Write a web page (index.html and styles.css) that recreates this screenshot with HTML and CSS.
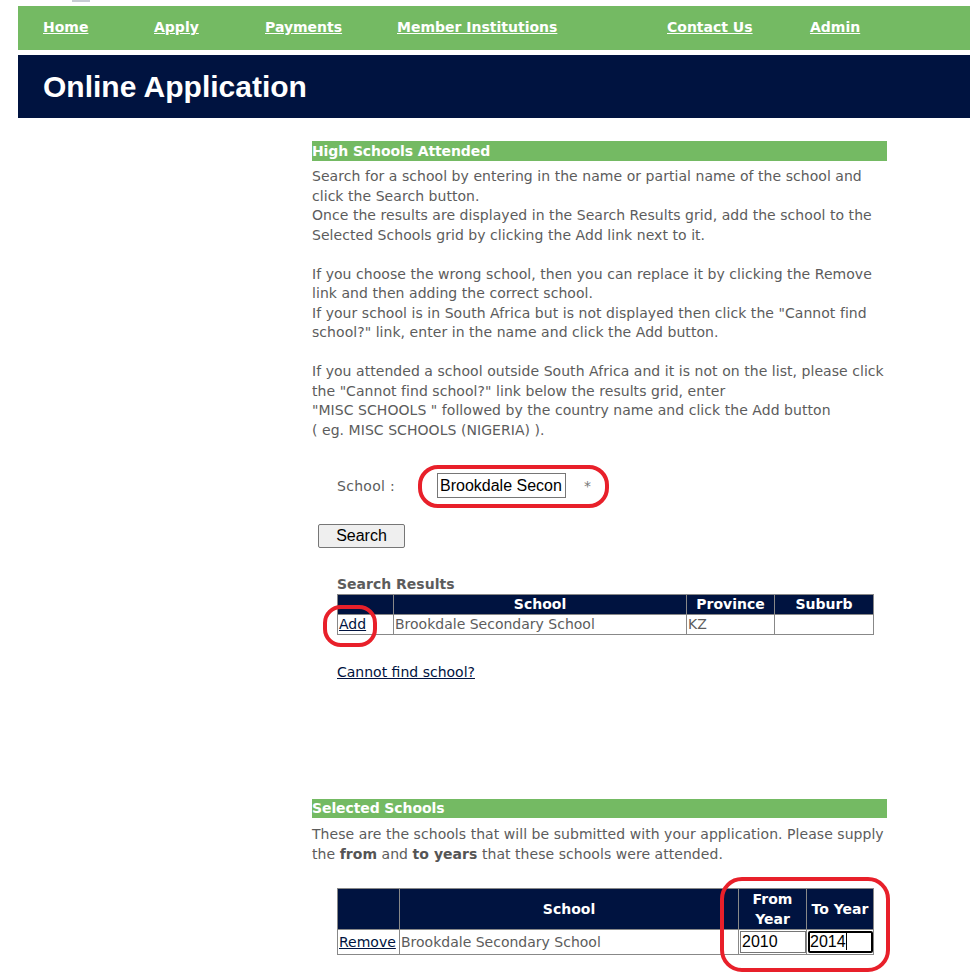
FILE: index.html
```html
<!DOCTYPE html>
<html>
<head>
<meta charset="utf-8">
<link rel="stylesheet" href="styles.css">
</head>
<body>
<div class="topmark"></div>
<div class="page">
  <nav class="nav">
    <a class="nav-link" href="#">Home</a>
    <a class="nav-link" href="#">Apply</a>
    <a class="nav-link" href="#">Payments</a>
    <a class="nav-link" href="#">Member Institutions</a>
    <a class="nav-link" href="#">Contact Us</a>
    <a class="nav-link" href="#">Admin</a>
  </nav>
  <header class="titlebar"><h1 class="title">Online Application</h1></header>

  <main class="content">
    <h2 class="section-head">High Schools Attended</h2>
    <p class="para">Search for a school by entering in the name or partial name of the school and<br>click the Search button.<br>Once the results are displayed in the Search Results grid, add the school to the<br>Selected Schools grid by clicking the Add link next to it.<br><br>If you choose the wrong school, then you can replace it by clicking the Remove<br>link and then adding the correct school.<br>If your school is in South Africa but is not displayed then click the "Cannot find<br>school?" link, enter in the name and click the Add button.<br><br>If you attended a school outside South Africa and it is not on the list, please click<br>the "Cannot find school?" link below the results grid, enter<br>"MISC SCHOOLS " followed by the country name and click the Add button<br>( eg. MISC SCHOOLS (NIGERIA) ).</p>

    <div class="school-row">
      <span class="label">School :</span>
      <span class="field-wrap">
        <input class="text-input" type="text" value="Brookdale Secon">
        <span class="req">*</span>
        <span class="ring ring-school"></span>
      </span>
    </div>

    <button class="btn">Search</button>

    <div class="results">
      <div class="results-title">Search Results</div>
      <div class="tbl-wrap">
        <table class="grid grid-results">
          <thead>
            <tr><th class="c1"></th><th class="c2">School</th><th class="c3">Province</th><th class="c4">Suburb</th></tr>
          </thead>
          <tbody>
            <tr><td><a class="link" href="#">Add</a></td><td>Brookdale Secondary School</td><td>KZ</td><td></td></tr>
          </tbody>
        </table>
        <span class="ring ring-add"></span>
      </div>
      <a class="link cannot" href="#">Cannot find school?</a>
    </div>

    <h2 class="section-head sel-head">Selected Schools</h2>
    <p class="para sel-para">These are the schools that will be submitted with your application. Please supply<br>the <b>from</b> and <b>to years</b> that these schools were attended.</p>

    <div class="tbl-wrap sel-wrap">
      <table class="grid grid-sel">
        <thead>
          <tr><th class="s1"></th><th class="s2">School</th><th class="s3">From<br>Year</th><th class="s4">To Year</th></tr>
        </thead>
        <tbody>
          <tr>
            <td><a class="link" href="#">Remove</a></td>
            <td>Brookdale Secondary School</td>
            <td class="yr"><span class="yr-input">2010</span></td>
            <td class="yr"><span class="yr-input focus">2014<span class="caret"></span></span></td>
          </tr>
        </tbody>
      </table>
      <span class="ring ring-years"></span>
    </div>
  </main>
</div>
</body>
</html>
```

FILE: styles.css
```css
html, body { margin: 0; padding: 0; background: #fff; }
body { font-family: "DejaVu Sans", Verdana, sans-serif; color: #5c5c5c; }

.topmark { position: absolute; left: 72px; top: 0; width: 18px; height: 2px; background: #c8ccd4; }

.page { padding: 6px 0 0 18px; }

.nav {
  background: #74ba63;
  height: 44px;
  display: grid;
  grid-template-columns: 111px 111px 132px 270px 143px auto;
  align-items: center;
  padding-left: 25px;
  box-sizing: border-box;
}
.nav-link {
  font-family: "DejaVu Sans", Verdana, sans-serif;
  font-weight: bold;
  font-size: 14px;
  color: #fff;
  text-decoration: underline;
  justify-self: start;
  margin-top: -2px;
}

.titlebar {
  margin-top: 5px;
  background: #001340;
  height: 63px;
  display: flex;
  align-items: center;
}
.title {
  margin: 0 0 0 25px;
  font-family: "Liberation Sans", Arial, sans-serif;
  font-weight: bold;
  font-size: 30px;
  color: #fff;
}

.content { margin-left: 294px; width: 575px; padding: 23px 0 60px 0; }

.section-head {
  margin: 0;
  background: #74ba63;
  color: #fff;
  font-size: 14px;
  font-weight: bold;
  height: 20px;
  line-height: 20px;
  letter-spacing: -0.1px;
}

.para {
  margin: 6px 0 0 0;
  font-size: 14px;
  line-height: 19.5px;
  letter-spacing: 0.05px;
  white-space: nowrap;
}
.para b { color: #555; }
.sel-para { margin-top: 7px; }

.school-row {
  margin: 33px 0 0 25px;
  display: flex;
  align-items: center;
  height: 25px;
}
.label { font-size: 14px; width: 100px; letter-spacing: 0.3px; }
.field-wrap { position: relative; display: flex; align-items: center; }
.text-input {
  box-sizing: border-box;
  width: 129px;
  height: 25px;
  padding: 1px 2px;
  border: 1px solid #767676;
  font-family: "Liberation Sans", Arial, sans-serif;
  font-size: 16px;
  color: #000;
  margin: 0;
}
.req { margin-left: 18px; font-size: 14px; color: #777; }

.ring {
  position: absolute;
  border: 4px solid #e8202a;
  border-radius: 20px;
  pointer-events: none;
}
.ring-school { left: -19px; top: -8px; width: 183px; height: 35px; }

.btn {
  display: block;
  margin: 26px 0 0 6px;
  width: 87px;
  height: 24px;
  font-family: "Liberation Sans", Arial, sans-serif;
  font-size: 16px;
  color: #000;
  background: #efefef;
  border: 1px solid #767676;
  border-radius: 2px;
  padding: 0;
}

.results { margin: 26px 0 0 25px; }
.results-title { font-size: 14px; font-weight: bold; color: #5c5c5c; line-height: 20px; }

.tbl-wrap { position: relative; }
.grid {
  border-collapse: collapse;
  font-size: 14px;
  table-layout: fixed;
}
.grid th {
  background: #001340;
  color: #fff;
  font-weight: bold;
  border: 1px solid #888;
  padding: 0;
  line-height: 19px;
}
.grid td {
  border: 1px solid #888;
  padding: 0 1px;
  line-height: 19px;
  color: #5c5c5c;
  text-align: left;
  white-space: nowrap;
}
.grid-results { width: 537px; }
.grid-results .c1 { width: 55px; }
.grid-results .c2 { width: 292px; }
.grid-results .c3 { width: 87px; }
.grid-results .c4 { width: 98px; }

.link { color: #001340; text-decoration: underline; }

.ring-add { left: -14px; top: 11px; width: 46px; height: 34px; border-radius: 18px; }

.cannot { display: inline-block; margin-top: 29px; font-size: 14px; line-height: 17px; }

.sel-head { margin-top: 118px; height: 19px; line-height: 19px; }

.sel-wrap { margin: 24px 0 0 25px; }
.grid-sel { width: 537px; }
.grid-sel th { height: 40px; line-height: 20px; }
.grid-sel .s1 { width: 61px; }
.grid-sel .s2 { width: 338px; }
.grid-sel .s3 { width: 67px; }
.grid-sel .s4 { width: 66px; }
.grid-sel td { height: 24px; }
.grid-sel td.yr { padding: 0 1px; }
.yr-input {
  display: block;
  box-sizing: border-box;
  width: 66px;
  height: 22px;
  margin: 0;
  padding: 0 1px;
  border: 1px solid #767676;
  font-family: "Liberation Sans", Arial, sans-serif;
  font-size: 16px;
  line-height: 20px;
  color: #000;
  background: #fff;
}
.yr-input.focus { border: 2px solid #000; border-radius: 2px; width: 65px; line-height: 18px; padding: 0; }
.caret { display: inline-block; width: 1px; height: 17px; background: #000; vertical-align: -3px; }
.ring-years { left: 383px; top: -11px; width: 162px; height: 87px; border-radius: 22px; }
```
